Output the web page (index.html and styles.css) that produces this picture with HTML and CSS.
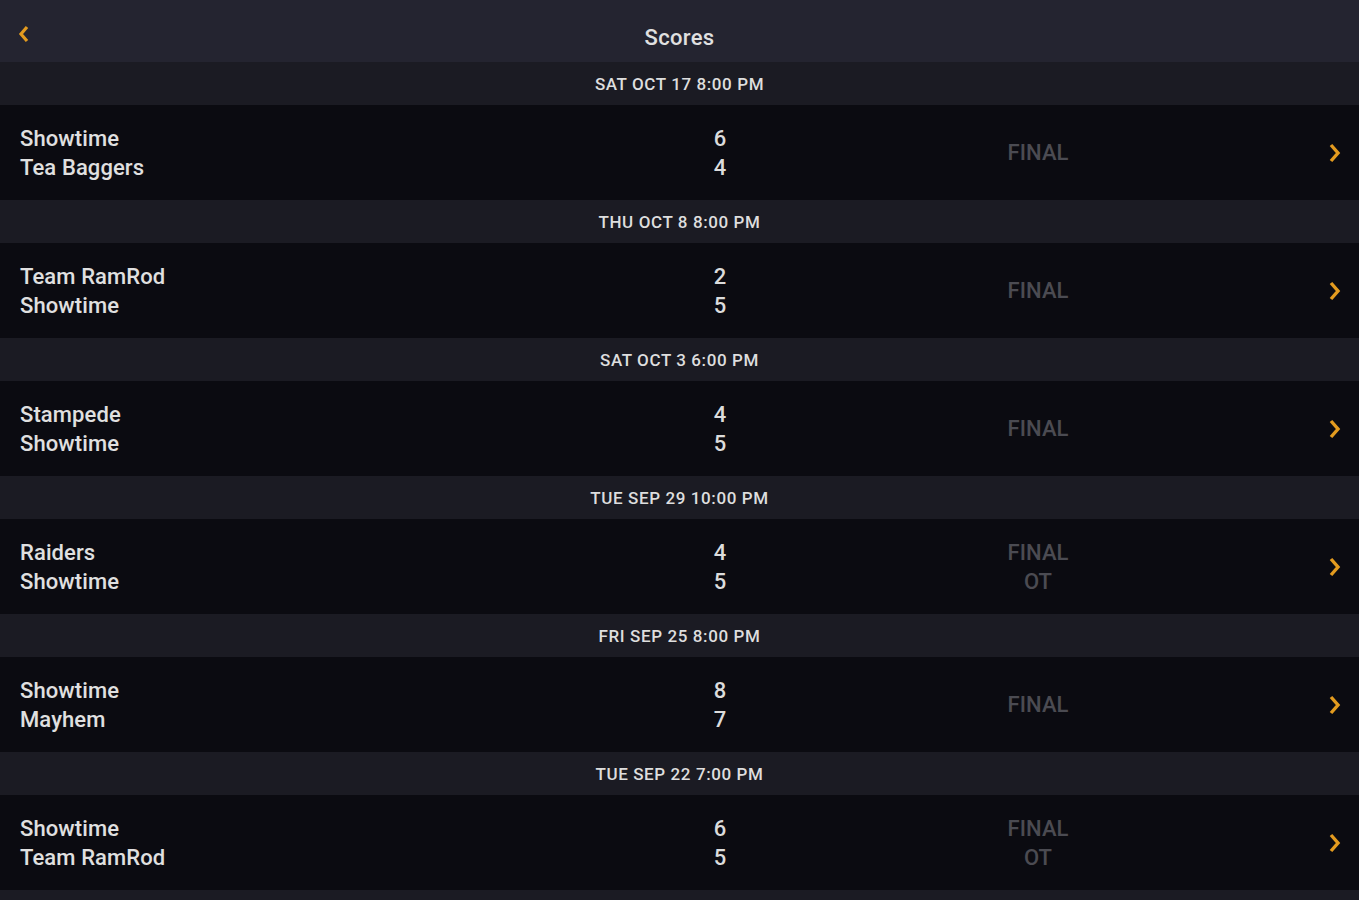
FILE: index.html
```html
<!DOCTYPE html>
<html>
<head>
<meta charset="utf-8">
<link rel="stylesheet" href="styles.css">
</head>
<body>
<div class="app">
  <header class="topbar">
    <svg class="back" width="16" height="22" viewBox="0 0 16 22"><path d="M11 4 L5 11 L11 18" fill="none" stroke="#e39b1f" stroke-width="3.2"/></svg>
    <div class="title">Scores</div>
  </header>
  <div class="list">
    <div class="date">SAT OCT 17 8:00 PM</div>
    <div class="game">
      <div class="teams"><div>Showtime</div><div>Tea Baggers</div></div>
      <div class="scores"><div>6</div><div>4</div></div>
      <div class="status"><div>FINAL</div></div>
      <svg class="chev" width="16" height="24" viewBox="0 0 16 24"><path d="M5 4 L12 12 L5 20" fill="none" stroke="#e39b1f" stroke-width="3.4"/></svg>
    </div>
    <div class="date">THU OCT 8 8:00 PM</div>
    <div class="game">
      <div class="teams"><div>Team RamRod</div><div>Showtime</div></div>
      <div class="scores"><div>2</div><div>5</div></div>
      <div class="status"><div>FINAL</div></div>
      <svg class="chev" width="16" height="24" viewBox="0 0 16 24"><path d="M5 4 L12 12 L5 20" fill="none" stroke="#e39b1f" stroke-width="3.4"/></svg>
    </div>
    <div class="date">SAT OCT 3 6:00 PM</div>
    <div class="game">
      <div class="teams"><div>Stampede</div><div>Showtime</div></div>
      <div class="scores"><div>4</div><div>5</div></div>
      <div class="status"><div>FINAL</div></div>
      <svg class="chev" width="16" height="24" viewBox="0 0 16 24"><path d="M5 4 L12 12 L5 20" fill="none" stroke="#e39b1f" stroke-width="3.4"/></svg>
    </div>
    <div class="date">TUE SEP 29 10:00 PM</div>
    <div class="game">
      <div class="teams"><div>Raiders</div><div>Showtime</div></div>
      <div class="scores"><div>4</div><div>5</div></div>
      <div class="status"><div>FINAL</div><div>OT</div></div>
      <svg class="chev" width="16" height="24" viewBox="0 0 16 24"><path d="M5 4 L12 12 L5 20" fill="none" stroke="#e39b1f" stroke-width="3.4"/></svg>
    </div>
    <div class="date">FRI SEP 25 8:00 PM</div>
    <div class="game">
      <div class="teams"><div>Showtime</div><div>Mayhem</div></div>
      <div class="scores"><div>8</div><div>7</div></div>
      <div class="status"><div>FINAL</div></div>
      <svg class="chev" width="16" height="24" viewBox="0 0 16 24"><path d="M5 4 L12 12 L5 20" fill="none" stroke="#e39b1f" stroke-width="3.4"/></svg>
    </div>
    <div class="date">TUE SEP 22 7:00 PM</div>
    <div class="game">
      <div class="teams"><div>Showtime</div><div>Team RamRod</div></div>
      <div class="scores"><div>6</div><div>5</div></div>
      <div class="status"><div>FINAL</div><div>OT</div></div>
      <svg class="chev" width="16" height="24" viewBox="0 0 16 24"><path d="M5 4 L12 12 L5 20" fill="none" stroke="#e39b1f" stroke-width="3.4"/></svg>
    </div>
    <div class="date"></div>
  </div>
</div>
</body>
</html>
```
FILE: styles.css
```css
html, body {
  margin: 0;
  padding: 0;
  background: #1b1b23;
  overflow: hidden;
}
.app {
  width: 1359px;
  height: 900px;
  overflow: hidden;
  font-family: Roboto, "Noto Sans", sans-serif;
  color: #dcdcdc;
}
.topbar {
  height: 62px;
  background: #242430;
  position: relative;
  display: flex;
  align-items: center;
  justify-content: center;
}
.back {
  position: absolute;
  left: 16px;
  top: 23px;
}
.title {
  font-size: 22px;
  font-weight: 500;
  color: #e0e0e0;
  padding-top: 12px;
  letter-spacing: 0.3px;
}
.date {
  height: 43px;
  background: #1b1b23;
  display: flex;
  align-items: center;
  justify-content: center;
  font-size: 17px;
  font-weight: 500;
  letter-spacing: 0.6px;
  color: #dedede;
}
.game {
  height: 95px;
  background: #0b0b11;
  display: grid;
  grid-template-columns: 620px 160px 476px 1fr;
  align-items: center;
  padding: 0 17px 0 20px;
  font-size: 22px;
  font-weight: 500;
  line-height: 29px;
  letter-spacing: 0.1px;
}
.teams {
  color: #e0e0e0;
}
.scores {
  text-align: center;
}
.status {
  text-align: center;
  color: #4b4b52;
}
.chev {
  justify-self: end;
}
```
